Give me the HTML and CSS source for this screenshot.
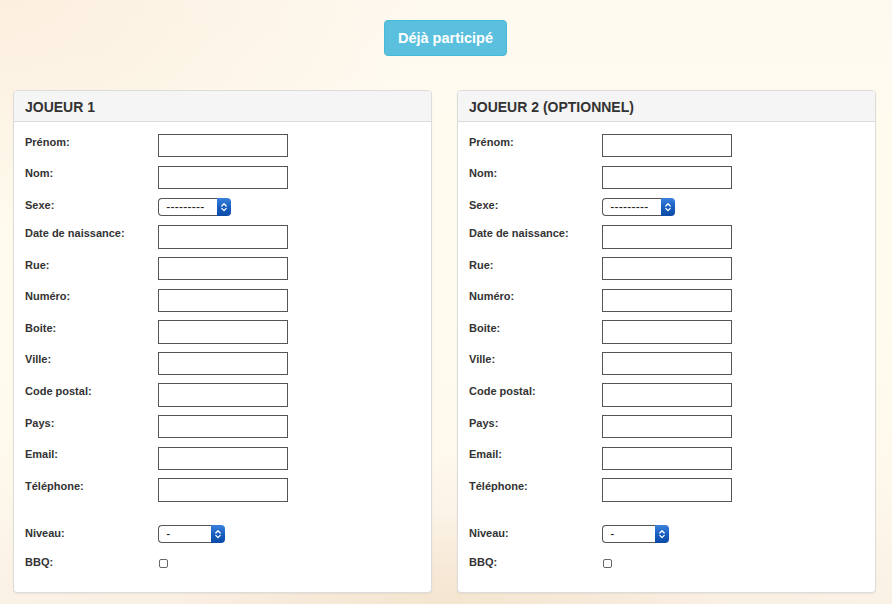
FILE: index.html
```html
<!DOCTYPE html>
<html lang="fr">
<head>
<meta charset="utf-8">
<title>Inscription</title>
<link rel="stylesheet" href="styles.css">
</head>
<body>
<div class="page">
  <div class="top">
    <button class="btn-info" type="button">Déjà participé</button>
  </div>
  <div class="panels">
    <section class="panel">
      <div class="panel-heading">JOUEUR 1</div>
      <div class="panel-body">
        <div class="row"><label>Prénom:</label><input type="text"></div>
        <div class="row"><label>Nom:</label><input type="text"></div>
        <div class="row row-sel"><label>Sexe:</label><span class="sel sel-sexe"><select><option>---------</option></select><span class="sel-arrow"><svg width="8" height="12" viewBox="0 0 8 12"><polyline points="1.8,5 4,2.8 6.2,5" /><polyline points="1.8,7.4 4,9.6 6.2,7.4" /></svg></span></span></div>
        <div class="row"><label>Date de naissance:</label><input type="text"></div>
        <div class="row"><label>Rue:</label><input type="text"></div>
        <div class="row"><label>Numéro:</label><input type="text"></div>
        <div class="row"><label>Boite:</label><input type="text"></div>
        <div class="row"><label>Ville:</label><input type="text"></div>
        <div class="row"><label>Code postal:</label><input type="text"></div>
        <div class="row"><label>Pays:</label><input type="text"></div>
        <div class="row"><label>Email:</label><input type="text"></div>
        <div class="row"><label>Téléphone:</label><input type="text"></div>
        <div class="row row-sel row-niveau"><label>Niveau:</label><span class="sel sel-niveau"><select><option>-</option></select><span class="sel-arrow"><svg width="8" height="12" viewBox="0 0 8 12"><polyline points="1.8,5 4,2.8 6.2,5" /><polyline points="1.8,7.4 4,9.6 6.2,7.4" /></svg></span></span></div>
        <div class="row row-bbq"><label>BBQ:</label><input type="checkbox" class="cb"></div>
      </div>
    </section>
    <section class="panel">
      <div class="panel-heading">JOUEUR 2 (OPTIONNEL)</div>
      <div class="panel-body">
        <div class="row"><label>Prénom:</label><input type="text"></div>
        <div class="row"><label>Nom:</label><input type="text"></div>
        <div class="row row-sel"><label>Sexe:</label><span class="sel sel-sexe"><select><option>---------</option></select><span class="sel-arrow"><svg width="8" height="12" viewBox="0 0 8 12"><polyline points="1.8,5 4,2.8 6.2,5" /><polyline points="1.8,7.4 4,9.6 6.2,7.4" /></svg></span></span></div>
        <div class="row"><label>Date de naissance:</label><input type="text"></div>
        <div class="row"><label>Rue:</label><input type="text"></div>
        <div class="row"><label>Numéro:</label><input type="text"></div>
        <div class="row"><label>Boite:</label><input type="text"></div>
        <div class="row"><label>Ville:</label><input type="text"></div>
        <div class="row"><label>Code postal:</label><input type="text"></div>
        <div class="row"><label>Pays:</label><input type="text"></div>
        <div class="row"><label>Email:</label><input type="text"></div>
        <div class="row"><label>Téléphone:</label><input type="text"></div>
        <div class="row row-sel row-niveau"><label>Niveau:</label><span class="sel sel-niveau"><select><option>-</option></select><span class="sel-arrow"><svg width="8" height="12" viewBox="0 0 8 12"><polyline points="1.8,5 4,2.8 6.2,5" /><polyline points="1.8,7.4 4,9.6 6.2,7.4" /></svg></span></span></div>
        <div class="row row-bbq"><label>BBQ:</label><input type="checkbox" class="cb"></div>
      </div>
    </section>
  </div>
</div>
</body>
</html>
```

FILE: styles.css
```css
* { box-sizing: border-box; }

html, body { height: 100%; }

body {
  margin: 0;
  font-family: "Liberation Sans", Arial, sans-serif;
  color: #333;
  background:
    radial-gradient(ellipse 420px 260px at 0% 0%, rgba(250, 234, 216, 0.7), rgba(250, 234, 216, 0) 100%),
    radial-gradient(ellipse 260px 90px at 50% 100%, rgba(244, 228, 206, 0.9), rgba(244, 228, 206, 0) 100%),
    radial-gradient(ellipse 700px 200px at 50% 108%, rgba(247, 233, 218, 0.9), rgba(247, 233, 218, 0) 100%),
    linear-gradient(180deg, #fef9ef 0%, #fffcef 30%, #fffbec 65%, #fcf4ea 100%);
}

.page {
  padding: 20px 16px 0 13px;
}

.top {
  display: flex;
  justify-content: center;
}

.btn-info {
  height: 36px;
  padding: 0 13px;
  margin-left: 2px;
  background: #5bc0de;
  border: 1px solid #46b8da;
  border-radius: 4px;
  color: #fff;
  font-family: "Liberation Sans", Arial, sans-serif;
  font-weight: bold;
  font-size: 14.5px;
  line-height: 1;
}

.panels {
  display: flex;
  gap: 25px;
  margin-top: 34px;
}

.panel {
  width: 419px;
  background: #fff;
  border: 1px solid #dcdcdc;
  border-radius: 4px;
  box-shadow: 0 1px 2px rgba(0, 0, 0, 0.06);
}

.panel-heading {
  height: 31px;
  padding: 2px 11px 0;
  display: flex;
  align-items: center;
  background: #f5f5f5;
  border-bottom: 1px solid #dcdcdc;
  border-radius: 3px 3px 0 0;
  font-size: 14px;
  font-weight: bold;
  color: #333;
}

.panel-body {
  display: flex;
  flex-direction: column;
  padding: 12px 11px 15px;
}

.row {
  display: flex;
  align-items: flex-start;
  margin-bottom: 8.3px;
}

.row label {
  width: 133.3px;
  flex: none;
  padding-top: 1.6px;
  font-size: 11px;
  line-height: 13px;
  font-weight: bold;
  color: #333;
}

.row input[type="text"] {
  width: 130px;
  height: 23.3px;
  margin: 0;
  padding: 0 3px;
  border: 1px solid #555;
  border-radius: 0;
  background: #fff;
}

.row-sel {
  height: 20px;
}

.sel {
  display: inline-flex;
  height: 17.6px;
  margin-top: 1.2px;
}

.sel select {
  appearance: none;
  -webkit-appearance: none;
  height: 100%;
  margin: 0;
  padding: 0 0 0 7px;
  border: 1px solid #555;
  border-right: none;
  border-radius: 4px 0 0 4px;
  background: #fff;
  color: #222;
  font-family: "Liberation Sans", Arial, sans-serif;
  font-size: 12px;
  letter-spacing: 0.25px;
  line-height: 1;
}

.sel-sexe select { width: 59px; }
.sel-niveau select { width: 53px; }

.sel-arrow {
  width: 14px;
  display: flex;
  align-items: center;
  justify-content: center;
  background: linear-gradient(180deg, #3b82dc 0%, #1a5fc0 50%, #0b4aa6 100%);
  border-radius: 0 4px 4px 0;
}

.sel-arrow polyline {
  fill: none;
  stroke: #fff;
  stroke-width: 1.3;
  stroke-linecap: round;
  stroke-linejoin: round;
}

.row-niveau {
  margin-top: 14.2px;
}

.row-niveau label {
  padding-top: 3.3px;
}

.row-bbq label {
  padding-top: 3.7px;
}

.cb {
  appearance: none;
  -webkit-appearance: none;
  width: 9px;
  height: 9px;
  margin: 6.2px 0 0 1px;
  border: 1px solid #666;
  border-radius: 2px;
  background: #fff;
}
```
